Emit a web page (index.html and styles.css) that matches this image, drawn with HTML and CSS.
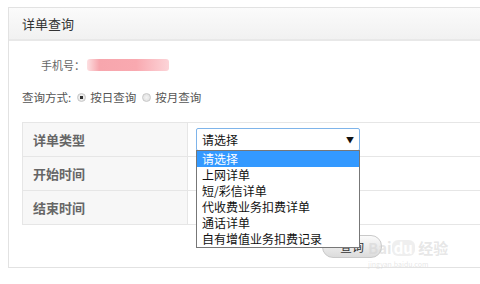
FILE: index.html
```html
<!DOCTYPE html>
<html lang="zh-CN">
<head>
    <meta charset="UTF-8">
    <title>详单查询</title>
    <link rel="stylesheet" href="styles.css">
</head>
<body>
    <div class="panel">
        <div class="panel-head">详单查询</div>
        <div class="panel-body">
            <div class="phone-row">
                <span class="phone-label">手机号：</span>
                <span class="phone-mask"></span>
            </div>
            <div class="mode-row">
                查询方式:
                <span class="radio checked"></span> 按日查询
                <span class="radio"></span> 按月查询
            </div>

            <table class="query-table">
                <tr>
                    <th>详单类型</th>
                    <td>
                        <div class="select-wrap">
                            <div class="select">请选择<span class="arrow">▼</span></div>
                            <ul class="options">
                                <li class="active">请选择</li>
                                <li>上网详单</li>
                                <li>短/彩信详单</li>
                                <li>代收费业务扣费详单</li>
                                <li>通话详单</li>
                                <li>自有增值业务扣费记录</li>
                            </ul>
                        </div>
                    </td>
                </tr>
                <tr>
                    <th>开始时间</th>
                    <td></td>
                </tr>
                <tr>
                    <th>结束时间</th>
                    <td></td>
                </tr>
            </table>

            <div class="btn-row">
                <button class="btn">查询</button>
            </div>
        </div>
    </div>
    <div class="watermark">Bai<span class="paw">du</span> 经验<small>jingyan.baidu.com</small></div>
</body>
</html>
```

FILE: styles.css
```css
body {
    margin: 0;
    font-family: "Noto Sans CJK SC", "Liberation Sans", sans-serif;
    font-size: 11px;
    color: #555;
    background: #fff;
    overflow: hidden;
}

.panel {
    margin: 7px 0 0 8px;
    height: 259px;
    border: 1px solid #e2e2e2;
    border-right: none;
}

.panel-head {
    height: 31px;
    line-height: 31px;
    padding-left: 13px;
    font-size: 13px;
    color: #333;
    background: linear-gradient(#fbfbfb, #f1f1f1);
    border-bottom: 2px solid #e8e8e8;
}

.panel-body {
    padding: 0 0 0 13px;
}

.phone-row {
    display: flex;
    align-items: center;
    height: 20px;
    margin-top: 14px;
    padding-left: 19px;
}

.phone-label {
    color: #666;
}

.phone-mask {
    width: 82px;
    height: 12px;
    margin-left: 2px;
    border-radius: 3px;
    background: linear-gradient(90deg, #fde0e2, #f7a6ad 15%, #f9a9b0 60%, #fcd4d8);
}

.mode-row {
    display: flex;
    align-items: center;
    gap: 4px;
    height: 20px;
    margin-top: 12px;
    font-size: 11.5px;
    color: #555;
}

.radio {
    display: inline-block;
    width: 9px;
    height: 9px;
    border-radius: 50%;
    border: 1px solid #c8c8c8;
    background: radial-gradient(#f4f4f4, #dcdcdc);
    box-sizing: border-box;
    margin-left: 2px;
}

.radio.checked {
    background: radial-gradient(#333 30%, #eee 40%, #ddd);
}

.query-table {
    margin-top: 15px;
    width: 100%;
    border-collapse: collapse;
}

.query-table th,
.query-table td {
    height: 33px;
    border: 1px solid #e6e6e6;
    padding: 0;
}

.query-table td {
    border-right: none;
}

.query-table th {
    width: 154px;
    text-align: left;
    padding-left: 10px;
    font-size: 13px;
    font-weight: bold;
    color: #666;
    background: #f7f7f7;
}

.query-table td {
    padding-left: 8px;
    vertical-align: middle;
}

.select-wrap {
    position: relative;
    width: 164px;
}

.select {
    display: flex;
    justify-content: space-between;
    align-items: center;
    height: 21px;
    padding: 0 5px 0 5px;
    border: 1px solid #7eb4ea;
    border-radius: 2px;
    font-size: 12px;
    color: #111;
    background: #fff;
}

.arrow {
    font-size: 8px;
    color: #111;
}

.options {
    position: absolute;
    left: 0;
    top: 22px;
    width: 164px;
    margin: 0;
    padding: 0;
    list-style: none;
    box-sizing: border-box;
    border: 1px solid #777;
    background: #fff;
    z-index: 2;
}

.options li {
    height: 16px;
    line-height: 16px;
    padding-left: 5px;
    font-size: 12px;
    color: #111;
}

.options li.active {
    background: #3399ff;
    color: #fff;
}

.btn-row {
    padding: 10px 0 0 300px;
}

.btn {
    width: 60px;
    height: 23px;
    border: 1px solid #c9c9c9;
    border-radius: 11px;
    background: linear-gradient(#fafafa, #dcdcdc);
    font-family: inherit;
    font-size: 12px;
    color: #333;
}

.watermark {
    position: absolute;
    left: 368px;
    top: 240px;
    font-size: 15px;
    font-weight: bold;
    color: rgba(210, 210, 210, 0.55);
    line-height: 16px;
}

.watermark .paw {
    display: inline-block;
    padding: 0 2px;
    border-radius: 6px;
    background: rgba(210, 210, 210, 0.35);
    color: #fff;
}

.watermark small {
    display: block;
    font-size: 7px;
    font-weight: normal;
}
```
